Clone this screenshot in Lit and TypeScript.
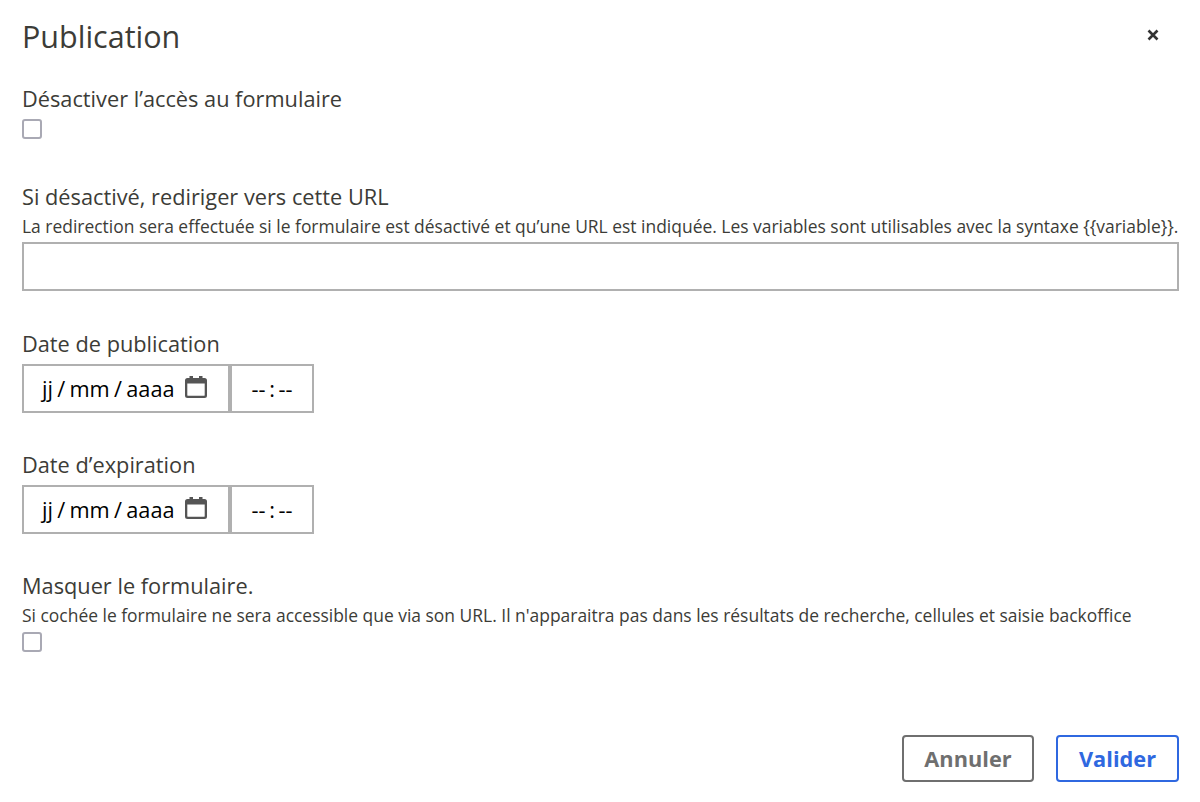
import { html, css, LitElement } from 'lit';
import { customElement } from 'lit/decorators.js';

const calendarIcon = html`
  <svg class="calendar" viewBox="0 0 22 22" width="22" height="22" aria-hidden="true">
    <path fill="#555" fill-rule="evenodd" d="M4.500 0h3.500v2h6V0h3.500v2h2A2.500 2.500 0 0 1 22 4.500v15a2.500 2.500 0 0 1-2.500 2.500h-17A2.500 2.500 0 0 1 0 19.500v-15A2.500 2.500 0 0 1 2.500 2h2V0zM2.300 7.500v11.700c0 .3.200.5.500.5h16.400c.3 0 .5-.2.500-.5V7.500H2.300z"/>
  </svg>
`;

@customElement('app-root')
export class AppRoot extends LitElement {
  static styles = css`
    :host {
      display: block;
      height: 802px;
      background: #fff;
      color: #3c3c37;
      font-family: "Open Sans", sans-serif;
    }

    .modal {
      box-sizing: border-box;
      height: 802px;
      padding: 15px 21px 20px 22px;
      display: flex;
      flex-direction: column;
    }

    .header {
      display: flex;
      justify-content: space-between;
      align-items: center;
      height: 42px;
      margin-bottom: 27px;
    }

    .title {
      margin: 0;
      font-size: 30.5px;
      font-weight: 400;
      line-height: 42px;
    }

    .close {
      display: flex;
      padding: 0;
      margin: 0 20px 2px 0;
      border: 0;
      background: none;
    }

    .field {
      display: flex;
      flex-direction: column;
      align-items: flex-start;
    }

    .field.first { height: 98px; }
    .field.url { height: 147px; }
    .field.date { height: 121px; }

    label {
      font-size: 21.76px;
      line-height: 30px;
    }

    .hint {
      font-size: 17.46px;
      line-height: 24px;
      white-space: nowrap;
      margin-top: 2px;
    }

    .checkbox {
      appearance: none;
      box-sizing: border-box;
      width: 20px;
      height: 20px;
      margin: 5px 0 0;
      border: 2px solid #a9a9b4;
      border-radius: 3px;
      background: #fff;
    }

    .text-input {
      box-sizing: border-box;
      width: 100%;
      height: 49px;
      margin-top: 4px;
      border: 2px solid #b0b0b0;
      background: #fff;
    }

    .date-row {
      display: flex;
      margin-top: 5px;
    }

    .date-box, .time-box {
      box-sizing: border-box;
      height: 49px;
      display: flex;
      align-items: center;
      border: 2px solid #b0b0b0;
      color: #000;
      font-size: 21.76px;
    }

    .date-box {
      width: 208px;
      padding-left: 18px;
      gap: 10px;
      white-space: pre;
    }

    .date-box span { word-spacing: -1.4px; }

    .calendar { margin-bottom: 3px; }

    .time-box {
      width: 84px;
      justify-content: center;
      white-space: pre;
      word-spacing: -2px;
    }

    .footer {
      margin-top: auto;
      display: flex;
      justify-content: flex-end;
      gap: 22px;
    }

    .btn {
      box-sizing: border-box;
      height: 47px;
      border: 2px solid;
      border-radius: 4px;
      background: #fff;
      font-family: inherit;
      font-size: 21.76px;
      font-weight: 700;
    }

    .cancel {
      width: 132px;
      border-color: #6f6f6f;
      color: #6f6f6f;
    }

    .submit {
      width: 123px;
      border-color: #2f68e0;
      color: #2f68e0;
    }
  `;

  renderDate(label: string) {
    return html`
      <div class="field date">
        <label>${label}</label>
        <div class="date-row">
          <div class="date-box"><span>jj / mm / aaaa</span>${calendarIcon}</div>
          <div class="time-box">-- : --</div>
        </div>
      </div>
    `;
  }

  render() {
    return html`
      <div class="modal">
        <div class="header">
          <h2 class="title">Publication</h2>
          <button class="close" aria-label="Fermer">
            <svg viewBox="0 0 12 12" width="12" height="12">
              <path d="M1.500 1.500l9 9M10.500 1.500l-9 9" stroke="#333" stroke-width="2.600" fill="none"/>
            </svg>
          </button>
        </div>

        <div class="field first">
          <label>Désactiver l’accès au formulaire</label>
          <input class="checkbox" type="checkbox" />
        </div>

        <div class="field url">
          <label>Si désactivé, rediriger vers cette URL</label>
          <div class="hint">La redirection sera effectuée si le formulaire est désactivé et qu’une URL est indiquée. Les variables sont utilisables avec la syntaxe {{variable}}.</div>
          <input class="text-input" type="text" />
        </div>

        ${this.renderDate('Date de publication')}
        ${this.renderDate('Date d’expiration')}

        <div class="field">
          <label>Masquer le formulaire.</label>
          <div class="hint">Si cochée le formulaire ne sera accessible que via son URL. Il n'apparaitra pas dans les résultats de recherche, cellules et saisie backoffice</div>
          <input class="checkbox" type="checkbox" />
        </div>

        <div class="footer">
          <button class="btn cancel">Annuler</button>
          <button class="btn submit">Valider</button>
        </div>
      </div>
    `;
  }
}
